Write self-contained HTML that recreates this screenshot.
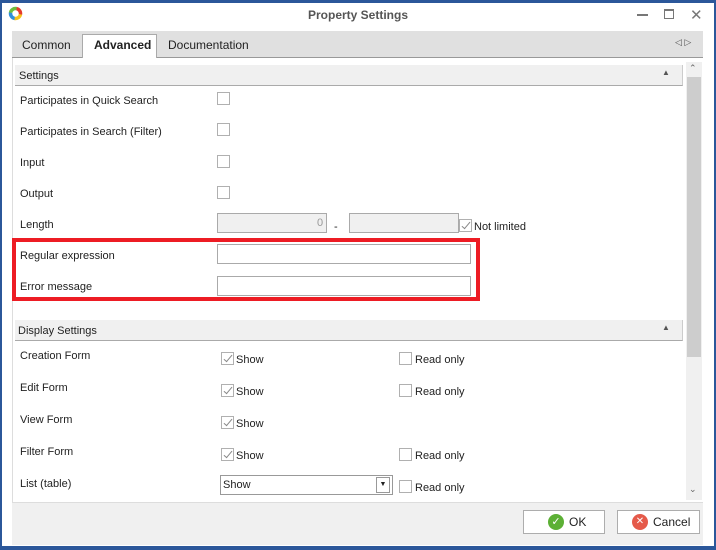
<!DOCTYPE html>
<html><head><style>
*{margin:0;padding:0;box-sizing:border-box}
body{width:716px;height:550px;position:relative;overflow:hidden;background:#fff;font-family:"Liberation Sans",sans-serif;font-size:11px;color:#222}
.a{position:absolute}
.cb{position:absolute;width:13px;height:13px;border:1px solid #b0b0b0;background:#fff}
.ck::after{content:"";position:absolute;left:4px;top:0px;width:3px;height:8px;border:solid #888;border-width:0 1.5px 1.5px 0;transform:rotate(40deg)}
.inp{position:absolute;border:1px solid #aaa;background:#fff}
.dis{background:#f0f0f0}
.hdr{position:absolute;left:15px;width:668px;height:21px;background:#f0f0f0;border-bottom:1px solid #aaa;border-right:1px solid #ccc}
.btn{position:absolute;border:1px solid #adadad;background:#fff;height:24px;font-size:12px}
</style></head><body>
<div class="a" style="left:0;top:0;width:716px;height:550px;border:2px solid #2b579a;border-top-width:3px;border-bottom-width:4px"></div>
<svg class="a" style="left:8px;top:6px" width="15" height="15" viewBox="0 0 15 15">
<circle cx="7.5" cy="7.5" r="5" fill="none" stroke-width="3.5" stroke="#e53a2b" stroke-dasharray="8 100" transform="rotate(-80 7.5 7.5)"/>
<circle cx="7.5" cy="7.5" r="5" fill="none" stroke-width="3.5" stroke="#f5c11b" stroke-dasharray="8 100" transform="rotate(10 7.5 7.5)"/>
<circle cx="7.5" cy="7.5" r="5" fill="none" stroke-width="3.5" stroke="#2f8fd8" stroke-dasharray="8 100" transform="rotate(100 7.5 7.5)"/>
<circle cx="7.5" cy="7.5" r="5" fill="none" stroke-width="3.5" stroke="#6cbf3c" stroke-dasharray="8 100" transform="rotate(190 7.5 7.5)"/>
</svg>
<div class="a" style="left:0;width:716px;top:8px;text-align:center;font-weight:bold;font-size:12px;color:#555">Property Settings</div>
<div class="a" style="left:637px;top:14px;width:11px;height:2px;background:#777"></div>
<div class="a" style="left:664px;top:9px;width:10px;height:10px;border:1px solid #777;border-top-width:2px"></div>
<div class="a" style="left:690px;top:6px;font-size:15px;color:#777">✕</div>
<!-- tabs strip -->
<div class="a" style="left:12px;top:31px;width:691px;height:27px;background:#e0e0e0;border-bottom:1px solid #999"></div>
<div class="a" style="left:22px;top:38px;font-size:12px">Common</div>
<div class="a" style="left:82px;top:34px;width:75px;height:24px;background:#fff;border:1px solid #aaa;border-bottom:none"></div>
<div class="a" style="left:94px;top:38px;font-size:12px;font-weight:bold">Advanced</div>
<div class="a" style="left:168px;top:38px;font-size:12px">Documentation</div>
<div class="a" style="left:675px;top:37px;font-size:9px;color:#555">◁ ▷</div>
<!-- content -->
<div class="a" style="left:12px;top:58px;width:691px;height:444px;background:#fff;border-left:1px solid #ddd"></div>
<div class="a" style="left:686px;top:62px;width:16px;height:438px;background:#f0f0f0"></div>
<div class="a" style="left:687px;top:77px;width:14px;height:280px;background:#cdcdcd"></div>
<div class="a" style="left:689px;top:63px;font-size:9px;color:#666">⌃</div>
<div class="a" style="left:689px;top:484px;font-size:9px;color:#666">⌄</div>
<div class="hdr" style="top:65px"></div>
<div class="a" style="left:19px;top:70px">Settings</div>
<div class="a" style="left:662px;top:68px;font-size:8px;color:#555">▲</div>
<div class="a" style="left:20px;top:95px">Participates in Quick Search</div>
<div class="cb" style="left:217px;top:92px"></div>
<div class="a" style="left:20px;top:126px">Participates in Search (Filter)</div>
<div class="cb" style="left:217px;top:123px"></div>
<div class="a" style="left:20px;top:157px">Input</div>
<div class="cb" style="left:217px;top:155px"></div>
<div class="a" style="left:20px;top:188px">Output</div>
<div class="cb" style="left:217px;top:186px"></div>
<div class="a" style="left:20px;top:219px">Length</div>
<div class="inp dis" style="left:217px;top:213px;width:110px;height:20px"></div>
<div class="a" style="left:317px;top:217px;color:#999">0</div>
<div class="a" style="left:334px;top:221px">-</div>
<div class="inp dis" style="left:349px;top:213px;width:110px;height:20px"></div>
<div class="cb ck" style="left:459px;top:219px"></div>
<div class="a" style="left:474px;top:221px">Not limited</div>
<div class="a" style="left:20px;top:250px">Regular expression</div>
<div class="inp" style="left:217px;top:244px;width:254px;height:20px"></div>
<div class="a" style="left:20px;top:281px">Error message</div>
<div class="inp" style="left:217px;top:276px;width:254px;height:20px"></div>
<div class="a" style="left:12px;top:238px;width:468px;height:63px;border:4px solid #ed1c24"></div>
<div class="hdr" style="top:320px"></div>
<div class="a" style="left:18px;top:325px">Display Settings</div>
<div class="a" style="left:662px;top:323px;font-size:8px;color:#555">▲</div>

<div class="a" style="left:20px;top:350px">Creation Form</div>
<div class="cb ck" style="left:221px;top:352px"></div><div class="a" style="left:236px;top:354px">Show</div>
<div class="cb" style="left:399px;top:352px"></div><div class="a" style="left:415px;top:354px">Read only</div>

<div class="a" style="left:20px;top:382px">Edit Form</div>
<div class="cb ck" style="left:221px;top:384px"></div><div class="a" style="left:236px;top:386px">Show</div>
<div class="cb" style="left:399px;top:384px"></div><div class="a" style="left:415px;top:386px">Read only</div>

<div class="a" style="left:20px;top:414px">View Form</div>
<div class="cb ck" style="left:221px;top:416px"></div><div class="a" style="left:236px;top:418px">Show</div>

<div class="a" style="left:20px;top:446px">Filter Form</div>
<div class="cb ck" style="left:221px;top:448px"></div><div class="a" style="left:236px;top:450px">Show</div>
<div class="cb" style="left:399px;top:448px"></div><div class="a" style="left:415px;top:450px">Read only</div>

<div class="a" style="left:20px;top:478px">List (table)</div>
<div class="inp" style="left:220px;top:475px;width:173px;height:20px;border-color:#999"></div>
<div class="a" style="left:223px;top:479px">Show</div>
<div class="a" style="left:376px;top:477px;width:14px;height:16px;border:1px solid #999;font-size:7px;text-align:center;line-height:14px">▼</div>
<div class="cb" style="left:399px;top:480px"></div><div class="a" style="left:415px;top:482px">Read only</div>

<!-- bottom -->
<div class="a" style="left:12px;top:502px;width:691px;height:43px;background:#f0f0f0;border-top:1px solid #ddd"></div>
<div class="btn" style="left:523px;top:510px;width:82px"></div>
<div class="a" style="left:548px;top:514px;width:16px;height:16px;border-radius:50%;background:#5cb035;color:#fff;font-size:11px;text-align:center;line-height:16px">✓</div>
<div class="a" style="left:569px;top:515px;font-size:12px">OK</div>
<div class="btn" style="left:617px;top:510px;width:83px"></div>
<div class="a" style="left:632px;top:514px;width:16px;height:16px;border-radius:50%;background:#e55a4a;color:#fff;font-size:10px;text-align:center;line-height:16px">✕</div>
<div class="a" style="left:653px;top:515px;font-size:12px">Cancel</div>
</body></html>
